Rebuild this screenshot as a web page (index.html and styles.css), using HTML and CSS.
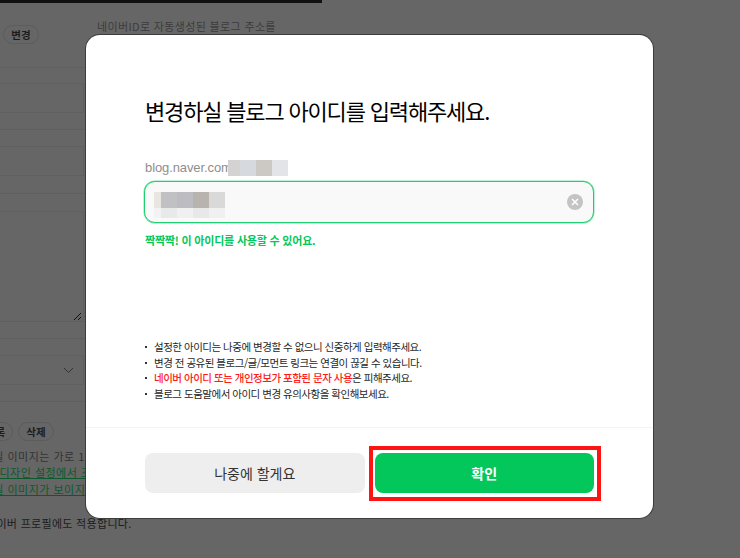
FILE: index.html
```html
<!DOCTYPE html>
<html lang="ko">
<head>
    <meta charset="UTF-8">
    <meta name="viewport" content="width=device-width, initial-scale=1.0">
    <title>블로그 아이디 변경</title>
    <link rel="stylesheet" href="styles.css">
</head>
<body>
    <!-- Dimmed settings page behind the dialog -->
    <div class="page">
        <div class="top-line"></div>
        <div class="address-row">
            <span class="pill pill-change">변경</span>
            <span class="address-note">네이버ID로 자동생성된 블로그 주소를</span>
        </div>
        <div class="rule rule-1"></div>
        <div class="field field-1"></div>
        <div class="rule rule-2"></div>
        <div class="field field-2"></div>
        <div class="rule rule-3"></div>
        <div class="field field-3">
            <svg class="resize-grip" width="9" height="9" viewBox="0 0 9 9">
                <path d="M1 8 8 1M5 8 8 5" stroke="#111" stroke-width="1" fill="none"/>
            </svg>
        </div>
        <div class="rule rule-4"></div>
        <div class="field field-4">
            <svg class="chevron" width="11" height="7" viewBox="0 0 11 7">
                <path d="M1 1 5.5 5.5 10 1" stroke="#333" stroke-width="1" fill="none"/>
            </svg>
        </div>
        <div class="rule rule-5"></div>
        <div class="image-buttons">
            <span class="pill pill-cut">등록</span>
            <span class="pill pill-delete">삭제</span>
        </div>
        <p class="note note-plain">프로필 이미지는 가로 160px 크기로 적용됩니다.</p>
        <p class="note note-link link-1">블로그 디자인 설정에서 조정할 수 있습니다.</p>
        <p class="note note-link link-2">프로필 이미지가 보이지 않는 경우 확인해주세요.</p>
        <p class="note note-last">네이버 프로필에도 적용합니다.</p>
    </div>

    <div class="dialog">
        <h1 class="dialog-title">변경하실 블로그 아이디를 입력해주세요.</h1>

        <div class="blog-url">
            <span>blog.naver.com</span>
            <div class="mosaic-row">
                <i class="m-narrow" style="background:#d4d2d2"></i>
                <i style="background:#d6d9de"></i>
                <i style="background:#ccc9c5"></i>
                <i style="background:#e3e4e7"></i>
            </div>
        </div>

        <div class="id-input">
            <div class="mosaic">
                <div class="mosaic-row">
                    <i class="m-small" style="background:#e9e5e2"></i>
                    <i style="background:#c1c1c4"></i>
                    <i style="background:#bdbcc2"></i>
                    <i style="background:#b8b3af"></i>
                    <i style="background:#d9d9da"></i>
                </div>
                <div class="mosaic-row mosaic-low">
                    <i class="m-small" style="background:#f3f3f3"></i>
                    <i style="background:#e8eaea"></i>
                    <i style="background:#f0f0f1"></i>
                    <i style="background:#e8e8e8"></i>
                    <i style="background:#f0f0f0"></i>
                </div>
            </div>
            <svg class="clear-icon" width="16" height="16" viewBox="0 0 16 16">
                <circle cx="8" cy="8" r="8" fill="#c4c4c4"/>
                <path d="M5 5 11 11M11 5 5 11" stroke="#fff" stroke-width="1.6"/>
            </svg>
        </div>
        <p class="id-ok">짝짝짝! 이 아이디를 사용할 수 있어요.</p>

        <ul class="notice">
            <li>설정한 아이디는 나중에 변경할 수 없으니 신중하게 입력해주세요.</li>
            <li>변경 전 공유된 블로그/글/모먼트 링크는 연결이 끊길 수 있습니다.</li>
            <li><strong>네이버 아이디 또는 개인정보가 포함된 문자 사용</strong>은 피해주세요.</li>
            <li>블로그 도움말에서 아이디 변경 유의사항을 확인해보세요.</li>
        </ul>

        <div class="dialog-footer">
            <button class="btn btn-later" type="button">나중에 할게요</button>
            <button class="btn btn-ok" type="button">확인</button>
        </div>
        <div class="callout"></div>
    </div>
</body>
</html>
```

FILE: styles.css
```css
:root {
    --green: #03c75a;
    --dim: #666666;
    --dim-line: #5f5f5f;
}

* {
    box-sizing: border-box;
    margin: 0;
    padding: 0;
}

html, body {
    height: 100%;
    overflow: hidden;
}

body {
    background-color: var(--dim);
    font-family: "Noto Sans CJK KR", "Noto Sans", sans-serif;
    color: #000;
    position: relative;
}

/* Background page */
.page {
    height: 558px;
    overflow: hidden;
    font-size: 11px;
    color: #2c2c2c;
}

.top-line {
    width: 322px;
    height: 3px;
    background-color: #111;
}

.address-row {
    display: flex;
    align-items: flex-start;
    height: 41px;
    padding: 16px 0 0 3px;
}

.pill {
    display: flex;
    align-items: center;
    justify-content: center;
    height: 19px;
    border: 1px solid #5c5c5c;
    border-radius: 10px;
    font-size: 10.5px;
    font-weight: 700;
    color: #1c1c1c;
    flex-shrink: 0;
}

.pill-change {
    width: 36px;
    margin-top: 6px;
}

.address-note {
    margin-left: 58px;
    font-size: 11px;
    line-height: 14px;
    color: #3c3c3c;
    letter-spacing: 0.35px;
    white-space: nowrap;
}

.rule {
    width: 90px;
    height: 1px;
    background-color: var(--dim-line);
}

.rule-1 { margin-top: 23px; }
.rule-2 { margin-top: 16px; }
.rule-3 { margin-top: 17px; }
.rule-4 { margin-top: 16px; }
.rule-5 { margin-top: 16px; }

.field {
    position: relative;
    width: 84px;
    border: 1px solid var(--dim-line);
    border-left: 0;
}

.field-1 {
    height: 30px;
    margin-top: 15px;
    box-shadow: 0 17px 0 -16px var(--dim-line);
}

.field-2 {
    height: 30px;
    margin-top: 16px;
}

.field-3 {
    height: 111px;
    margin-top: 17px;
}

.field-4 {
    height: 30px;
    margin-top: 16px;
}

.resize-grip {
    position: absolute;
    right: 1px;
    bottom: 0;
}

.chevron {
    position: absolute;
    left: 63px;
    top: 11px;
}

.image-buttons {
    display: flex;
    gap: 5px;
    margin: 20px 0 0 -22px;
}

.pill-cut { width: 35px; }
.pill-delete { width: 36px; }

.note {
    font-size: 11px;
    line-height: 16px;
    white-space: nowrap;
    letter-spacing: 0.5px;
}

.note-plain {
    margin: 7px 0 0 -28px;
    color: #333;
}

.note-link {
    color: #0a5a2c;
    text-decoration: underline;
}

.link-1 {
    margin: 0 0 0 -36px;
}

.link-2 {
    margin: 1px 0 0 -28px;
}

.note-last {
    margin: 18px 0 0 -14px;
    color: #1c1c1c;
    letter-spacing: 0.3px;
}

/* Dialog */
.dialog {
    position: absolute;
    left: 86px;
    top: 35px;
    width: 567px;
    height: 483px;
    background-color: #fff;
    border-radius: 14px;
    box-shadow: 0 0 0 1px #3c3c3c;
    padding: 58px 59px 0;
    display: flex;
    flex-direction: column;
}

.dialog-title {
    font-size: 22px;
    font-weight: 400;
    line-height: 34px;
    letter-spacing: -1.17px;
    white-space: nowrap;
    color: #000;
}

.blog-url {
    display: flex;
    align-items: center;
    height: 16px;
    margin-top: 33px;
    font-family: "Liberation Sans", "Noto Sans CJK KR", sans-serif;
    font-size: 13px;
    color: #8e8e8e;
    letter-spacing: -0.1px;
}

.blog-url span {
    width: 83px;
    margin-top: -2px;
}

.mosaic-row {
    display: flex;
    height: 16px;
}

.mosaic-row i {
    display: block;
    width: 16px;
}

.mosaic-row .m-narrow { width: 12px; }
.mosaic-row .m-small { width: 7px; }
.mosaic-low { height: 10px; }

.id-input {
    display: flex;
    align-items: center;
    justify-content: space-between;
    width: 450px;
    height: 42px;
    margin: 5px 0 0 -1px;
    padding: 0 10px 0 9px;
    background-color: #f9f9f9;
    border: 1px solid #1fcf72;
    border-radius: 11px;
    box-shadow: 0 0 0 0.5px #7fe3ad;
}

.mosaic {
    margin-top: 5px;
}

.id-ok {
    margin-top: 9px;
    font-size: 11px;
    line-height: 16px;
    font-weight: 700;
    color: var(--green);
    letter-spacing: -0.2px;
}

.notice {
    list-style: none;
    margin-top: 91px;
    font-size: 10.5px;
    line-height: 15.6px;
    color: #1f1f1f;
    letter-spacing: -0.49px;
}

.notice li {
    position: relative;
    padding-left: 9px;
    white-space: nowrap;
}

.notice li::before {
    content: "";
    position: absolute;
    left: 0;
    top: 7px;
    width: 2px;
    height: 2px;
    background-color: #333;
}

.notice strong {
    color: #ff1a1a;
    font-weight: 500;
}

.dialog-footer {
    position: absolute;
    left: 0;
    right: 0;
    bottom: 0;
    height: 91px;
    border-top: 1px solid #f3f3f3;
    padding: 25px 59px 0;
    display: flex;
    gap: 10px;
}

.btn {
    flex: 1;
    height: 40px;
    border: 0;
    border-radius: 8px;
    font-family: inherit;
    font-size: 14px;
}

.btn-later {
    background-color: #eeeeee;
    color: #333;
}

.btn-ok {
    background-color: var(--green);
    color: #fff;
    font-weight: 700;
}

/* Red annotation drawn on top of the screenshot */
.callout {
    position: absolute;
    left: 283px;
    top: 411px;
    width: 232px;
    height: 55px;
    border: 4px solid #ff1414;
}
```
